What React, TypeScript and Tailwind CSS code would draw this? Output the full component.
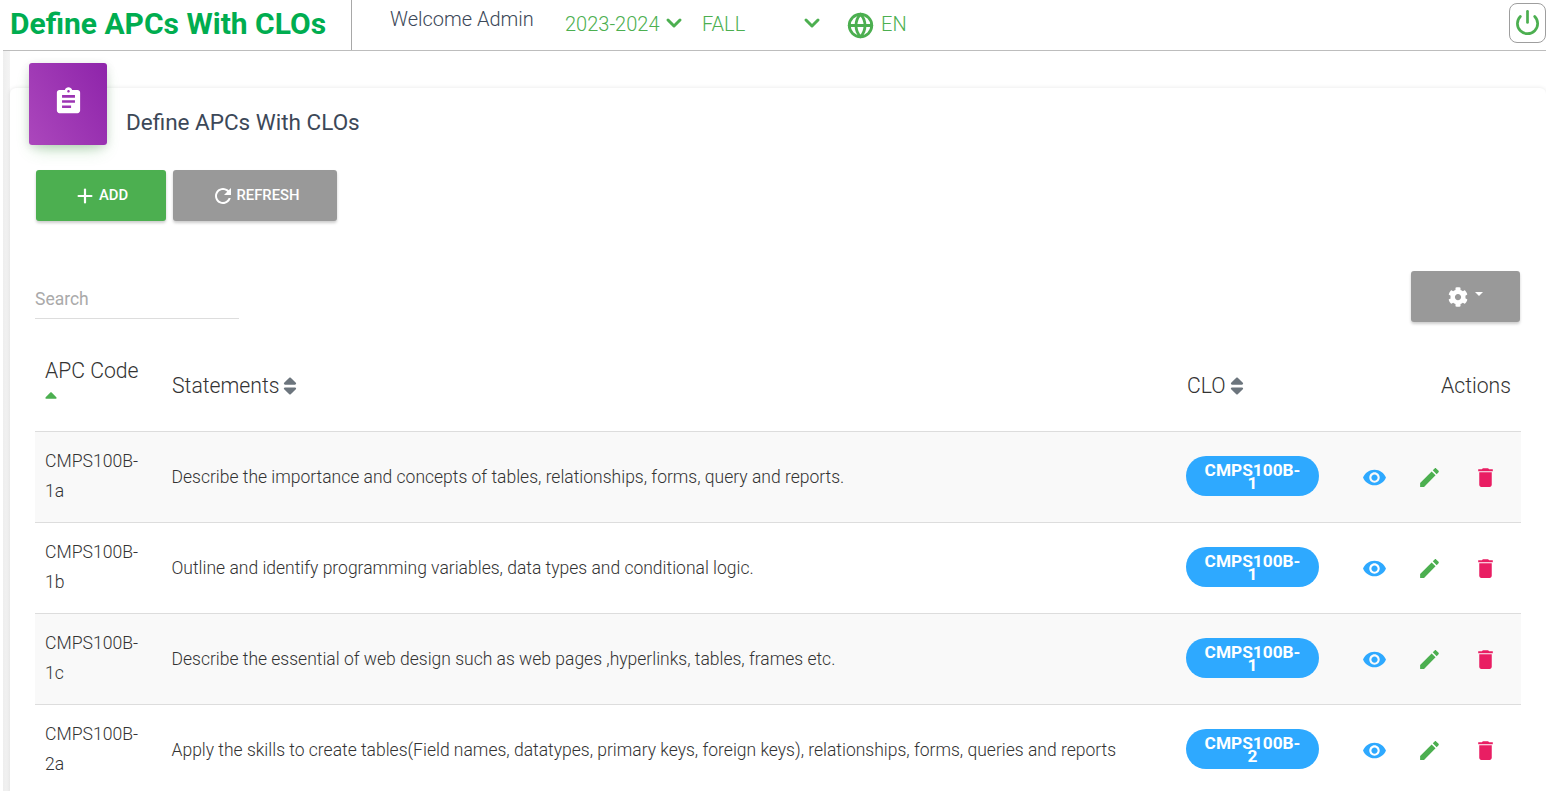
import { ChevronDown, Globe, Plus, Power } from "lucide-react";
import { FaCog, FaSort, FaSortUp } from "react-icons/fa";

const rows = [
  { code: ["CMPS100B-", "1a"], text: "Describe the importance and concepts of tables, relationships, forms, query and reports.", clo: ["CMPS100B-", "1"], shade: true },
  { code: ["CMPS100B-", "1b"], text: "Outline and identify programming variables, data types and conditional logic.", clo: ["CMPS100B-", "1"], shade: false },
  { code: ["CMPS100B-", "1c"], text: "Describe the essential of web design such as web pages ,hyperlinks, tables, frames etc.", clo: ["CMPS100B-", "1"], shade: true },
  { code: ["CMPS100B-", "2a"], text: "Apply the skills to create tables(Field names, datatypes, primary keys, foreign keys), relationships, forms, queries and reports", clo: ["CMPS100B-", "2"], shade: false },
];

function MaterialIcon({ d, className }: { d: string; className: string }) {
  return (
    <svg viewBox="0 0 24 24" fill="currentColor" className={className}>
      <path d={d} />
    </svg>
  );
}

const EYE = "M12 4.5C7 4.5 2.73 7.61 1 12c1.73 4.39 6 7.5 11 7.5s9.27-3.11 11-7.5c-1.73-4.39-6-7.5-11-7.5zM12 17c-2.76 0-5-2.24-5-5s2.24-5 5-5 5 2.24 5 5-2.24 5-5 5zm0-8c-1.66 0-3 1.34-3 3s1.34 3 3 3 3-1.34 3-3-1.34-3-3-3z";
const PENCIL = "M3 17.25V21h3.75L17.81 9.94l-3.75-3.75L3 17.25zM20.71 7.04c.39-.39.39-1.02 0-1.41l-2.34-2.34c-.39-.39-1.02-.39-1.41 0l-1.83 1.83 3.75 3.75 1.83-1.83z";
const TRASH = "M6 19c0 1.1.9 2 2 2h8c1.1 0 2-.9 2-2V7H6v12zM19 4h-3.5l-1-1h-5l-1 1H5v2h14V4z";
const ASSIGNMENT = "M19 3h-4.18C14.4 1.84 13.3 1 12 1c-1.3 0-2.4.84-2.82 2H5c-1.1 0-2 .9-2 2v14c0 1.1.9 2 2 2h14c1.1 0 2-.9 2-2V5c0-1.1-.9-2-2-2zm-7 0c.55 0 1 .45 1 1s-.45 1-1 1-1-.45-1-1 .45-1 1-1zm2 14H7v-2h7v2zm3-4H7v-2h10v2zm0-4H7V7h10v2z";
const REFRESH = "M17.65 6.35C16.2 4.9 14.21 4 12 4c-4.42 0-7.99 3.58-7.99 8s3.57 8 7.99 8c3.73 0 6.84-2.55 7.73-6h-2.08c-.82 2.33-3.04 4-5.65 4-3.31 0-6-2.69-6-6s2.69-6 6-6c1.66 0 3.14.69 4.22 1.78L13 11h7V4l-2.35 2.35z";

export default function App() {
  return (
    <div className="h-[791px] overflow-hidden bg-white pl-[3px] font-['Roboto',sans-serif] text-[#3c4858]">
      {/* Top bar */}
      <header className="flex h-[51px] items-center border-b border-[#bdbdbd] bg-white">
        <h1 className="mb-[2px] w-[348px] pl-[7px] text-[30px] leading-[48px] font-bold whitespace-nowrap text-[#00ad50]">
          Define APCs With CLOs
        </h1>
        <div className="flex h-full items-center border-l border-[#a8a8a8] pl-[38px]">
          <span className="mb-[12px] w-[175px] text-[20px] font-light whitespace-nowrap text-[#3c4858]">Welcome Admin</span>
          <span className="mb-[3px] w-[97px] text-[20px] font-light text-[#4caf50]">2023-2024</span>
          <ChevronDown className="mb-[4px] h-[24px] w-[24px] text-[#4caf50]" strokeWidth={3} />
          <span className="mb-[3px] ml-[16px] w-[98px] text-[20px] font-light text-[#4caf50]">FALL</span>
          <ChevronDown className="mb-[4px] h-[24px] w-[24px] text-[#4caf50]" strokeWidth={3} />
          <Globe className="ml-[23px] h-[27px] w-[27px] text-[#4caf50]" strokeWidth={2.5} />
          <span className="mb-[3px] ml-[7px] text-[20px] font-light text-[#4caf50]">EN</span>
        </div>
        <button className="mb-[5px] ml-auto flex h-[40px] w-[37px] items-center justify-center rounded-lg border border-[#9e9e9e] bg-white">
          <Power className="h-[27px] w-[27px] text-[#4caf50]" strokeWidth={2.4} />
        </button>
      </header>

      <div className="h-[740px] bg-[linear-gradient(90deg,#eeeeee_0px,#f4f4f4_7px,#ffffff_7px)] pt-[37px] pl-[7px]">
        {/* Card */}
        <section className="h-[720px] rounded-t-md bg-white pr-[25px] pl-[25px] shadow-[0_0_4px_rgba(0,0,0,0.1)]">
          <div className="flex items-start">
            <div className="-mt-[25px] ml-[-6px] flex h-[82px] w-[78px] shrink-0 items-center justify-center rounded-[3px] bg-[linear-gradient(60deg,#ab47bc,#8e24aa)] shadow-[0_8px_16px_-6px_rgba(76,175,80,0.45),0_2px_10px_rgba(0,0,0,0.12)]">
              <MaterialIcon d={ASSIGNMENT} className="mb-[5px] h-[31px] w-[31px] text-white" />
            </div>
            <h2 className="mt-[19px] ml-[19px] text-[22.5px] leading-[30px] text-[#3c4858]">Define APCs With CLOs</h2>
          </div>

          <div className="mt-[25px] ml-px flex gap-[7px]">
            <button className="flex h-[51px] w-[130px] items-center justify-center gap-[3px] rounded-[3px] bg-[#4caf50] text-[14.8px] font-medium text-white shadow-[0_2px_3px_rgba(0,0,0,0.2)]">
              <Plus className="h-[22px] w-[22px]" strokeWidth={2.4} />
              ADD
            </button>
            <button className="flex h-[51px] w-[164px] items-center justify-center gap-[2px] rounded-[3px] bg-[#999999] text-[14.8px] font-medium text-white shadow-[0_2px_3px_rgba(0,0,0,0.2)]">
              <MaterialIcon d={REFRESH} className="h-[24px] w-[24px]" />
              REFRESH
            </button>
          </div>

          <div className="mt-[50px] flex items-start justify-between pr-[1px]">
            <div className="mt-[16px] w-[204px] border-b border-[#dddddd] pb-[7px] text-[17.5px] leading-[24px] text-[#aaaaaa]">
              Search
            </div>
            <button className="flex h-[51px] w-[109px] items-center justify-center gap-[7px] rounded-[3px] bg-[#999999] text-white shadow-[0_2px_3px_rgba(0,0,0,0.2)]">
              <FaCog className="h-[20px] w-[20px]" />
              <span className="mb-[5px] h-0 w-0 border-x-[4px] border-t-[4px] border-x-transparent border-t-white" />
            </button>
          </div>

          {/* Table */}
          <table className="mt-[9px] w-[1486px] table-fixed border-collapse text-[#333333]">
            <colgroup>
              <col className="w-[127px]" />
              <col className="w-[1015px]" />
              <col className="w-[344px]" />
            </colgroup>
            <thead>
              <tr className="h-[100px] border-b border-[#dddddd] text-left text-[21.2px] font-light">
                <th className="pt-[4px] pl-[10px] align-middle font-light">
                  <div className="leading-[30px]">APC Code</div>
                  <FaSortUp className="mt-[4px] -ml-px h-[20px] w-[14px] text-[#4caf50]" />
                </th>
                <th className="pt-[10px] pl-[10px] font-light">
                  <span className="inline-flex items-center gap-[4px]">
                    Statements <FaSort className="h-[22px] w-[14px] text-[#6c757d]" />
                  </span>
                </th>
                <th className="pt-[10px] pl-[10px] font-light">
                  <div className="flex items-center justify-between pr-[10px]">
                    <span className="inline-flex items-center gap-[4px]">
                      CLO <FaSort className="h-[22px] w-[14px] text-[#6c757d]" />
                    </span>
                    <span>Actions</span>
                  </div>
                </th>
              </tr>
            </thead>
            <tbody>
              {rows.map((row) => (
                <tr key={row.code[1]} className={`h-[91px] border-b border-[#dddddd] ${row.shade ? "bg-[#f9f9f9]" : "bg-white"}`}>
                  <td className="pb-[2px] pl-[10px] text-[17.6px] leading-[30px] font-light">
                    <div>{row.code[0]}</div>
                    <div>{row.code[1]}</div>
                  </td>
                  <td className="pt-[2px] pl-[9.5px] text-[17.5px] font-light whitespace-nowrap">{row.text}</td>
                  <td className="pl-[9px]">
                    <div className="flex items-center">
                      <div className="mb-[2px] flex h-[40px] w-[133px] flex-col items-center justify-center rounded-[20px] bg-[#2ea9ff] pt-[3px] text-[17.3px] leading-[13px] font-bold text-white">
                        <span>{row.clo[0]}</span>
                        <span>{row.clo[1]}</span>
                      </div>
                      <MaterialIcon d={EYE} className="mt-[2px] ml-[43px] h-[25px] w-[25px] text-[#2ea9ff]" />
                      <MaterialIcon d={PENCIL} className="mt-[2px] ml-[30px] h-[25px] w-[25px] text-[#4caf50]" />
                      <MaterialIcon d={TRASH} className="mt-[2px] ml-[31px] h-[25px] w-[25px] text-[#e91e63]" />
                    </div>
                  </td>
                </tr>
              ))}
            </tbody>
          </table>
        </section>
      </div>
    </div>
  );
}
